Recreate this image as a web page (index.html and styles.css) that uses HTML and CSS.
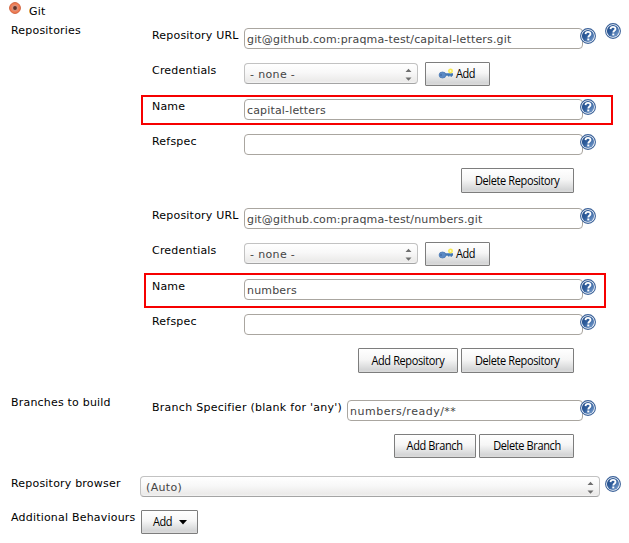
FILE: index.html
```html
<!DOCTYPE html>
<html lang="en">
<head>
<meta charset="utf-8">
<title>Git</title>
<link rel="stylesheet" href="styles.css">
</head>
<body>
<svg width="0" height="0" class="defs" aria-hidden="true">
  <defs>
    <linearGradient id="blue" x1="0" y1="0" x2="1" y2="1">
      <stop offset="0" stop-color="#204a87"/><stop offset=".45" stop-color="#2f5d9c"/><stop offset="1" stop-color="#86a9d6"/>
    </linearGradient>
    <symbol id="help" viewBox="0 0 16 16">
      <circle cx="8" cy="8" r="7.4" fill="#fff" stroke="#3a6199" stroke-width="1.1"/>
      <circle cx="8" cy="8" r="6.1" fill="url(#blue)"/>
      <path d="M5.500 6.100C5.600 4.500 6.600 3.900 8 3.900s2.500.7 2.500 2C10.500 7.500 8.300 7.400 8.300 9.400" fill="none" stroke="#fff" stroke-width="1.800"/>
      <path d="M7.300 10.500h2v1.900h-2z" fill="#fff"/>
    </symbol>
    <symbol id="key" viewBox="0 0 16 16">
      <ellipse cx="8" cy="14.800" rx="5.500" ry=".8" fill="#ddd"/>
      <path d="M6 7.300H15v2.400h-1v1h-1.500V9.700h-1v.9H10V9.700H6z" fill="#4278b5"/>
      <ellipse cx="4.500" cy="9" rx="3.400" ry="3" fill="#5b8ac5" stroke="#4a7ab4" stroke-width=".8"/>
      <path d="M2.300 9h1.500" stroke="#2d568c" stroke-width="1.200"/>
      <circle cx="12.500" cy="5" r="1.700" fill="#fffbc0" stroke="#f8ea50" stroke-width="1.500"/>
    </symbol>
    <symbol id="updown" viewBox="0 0 7 13">
      <path d="M.5 4L3.500 .8 6.500 4zM.5 9.500L3.500 12.700 6.500 9.500z" fill="#6e6e6e"/>
    </symbol>
  </defs>
</svg>
<main class="form">
  <header class="title">
    <svg class="radio" viewBox="0 0 12 12"><circle cx="6" cy="6" r="5.400" fill="#f07f57" stroke="#d0603c"/><circle cx="6" cy="6" r="3.200" fill="#d9907a"/><circle cx="6" cy="6" r="1.900" fill="#5c342c"/></svg>
    <span>Git</span>
  </header>

  <section class="section repositories">
    <div class="section-label">Repositories</div>
    <div class="fields">
      <div class="row"><label>Repository URL</label><div class="input">git@github.com:praqma-test/capital-letters.git</div><svg class="help"><use href="#help"/></svg></div>
      <div class="row tall"><label>Credentials</label><div class="select">- none -<svg class="arrows"><use href="#updown"/></svg></div><button class="key-button"><svg class="key"><use href="#key"/></svg><span>Add</span></button></div>
      <div class="row"><label>Name</label><div class="input">capital-letters</div><svg class="help"><use href="#help"/></svg><i class="mark mark-first"></i></div>
      <div class="row short"><label>Refspec</label><div class="input"></div><svg class="help"><use href="#help"/></svg></div>
      <div class="actions"><button class="b-delrepo"><span>Delete Repository</span></button></div>

      <div class="row"><label>Repository URL</label><div class="input">git@github.com:praqma-test/numbers.git</div><svg class="help"><use href="#help"/></svg></div>
      <div class="row tall"><label>Credentials</label><div class="select">- none -<svg class="arrows"><use href="#updown"/></svg></div><button class="key-button"><svg class="key"><use href="#key"/></svg><span>Add</span></button></div>
      <div class="row"><label>Name</label><div class="input">numbers</div><svg class="help"><use href="#help"/></svg><i class="mark mark-second"></i></div>
      <div class="row short"><label>Refspec</label><div class="input"></div><svg class="help"><use href="#help"/></svg></div>
      <div class="actions"><button class="b-addrepo"><span>Add Repository</span></button><button class="b-delrepo"><span>Delete Repository</span></button></div>
    </div>
    <svg class="help section-help"><use href="#help"/></svg>
  </section>

  <section class="section branches">
    <div class="section-label">Branches to build</div>
    <div class="fields">
      <div class="row short wide-label"><label>Branch Specifier (blank for 'any')</label><div class="input">numbers/ready/**</div><svg class="help"><use href="#help"/></svg></div>
      <div class="actions low"><button class="b-addbranch"><span>Add Branch</span></button><button class="b-delbranch"><span>Delete Branch</span></button></div>
    </div>
  </section>

  <section class="line browser">
    <div class="line-label">Repository browser</div>
    <div class="select">(Auto)<svg class="arrows"><use href="#updown"/></svg></div>
    <svg class="help"><use href="#help"/></svg>
  </section>

  <section class="line">
    <div class="line-label">Additional Behaviours</div>
    <button class="menu-button"><span>Add</span><svg class="caret" viewBox="0 0 8 5"><path d="M0 0h8L4 4.500z"/></svg></button>
  </section>
</main>
</body>
</html>
```
FILE: styles.css
```css
* { box-sizing: border-box; }
body {
  margin: 0;
  background: #fff;
  color: #000;
  font: 11px/14px "DejaVu Sans", Verdana, sans-serif;
  letter-spacing: .2px;
}
svg { display: block; flex: none; }
.defs { position: absolute; }
.form { width: 629px; height: 543px; overflow: hidden; padding-left: 11px; white-space: nowrap; }
.title { display: flex; height: 23px; padding-top: 2px; }
.radio { width: 12px; height: 12px; margin: 0 8px 0 -2px; }
.title span { padding-top: 3px; }

.section { display: grid; grid-template-columns: 141px 428px 25px; }
.repositories { height: 372px; }
.branches { height: 81px; }
.section-label { padding-top: 1px; }
.fields { padding-top: 5px; }
.section-help { margin-left: 25px; }

.row { position: relative; display: grid; grid-template-columns: 92px 339px 16px; height: 35px; align-items: start; }
.row.tall { height: 36px; grid-template-columns: 92px 174px 65px; }
.row.short { height: 34px; }
.row.wide-label { grid-template-columns: 195px 236px 16px; }
.row label { padding-top: 1px; }
.wide-label label { letter-spacing: .27px; }
.wide-label .input { letter-spacing: .5px; }
.row .help { margin-left: -3px; }
.row .key-button { margin: -1px 0 0 7px; }

.input, .select { height: 21px; line-height: 22px; border-radius: 4px; color: #444; }
.input { border: 1px solid #aaa6a0; padding-left: 2px; background: #fff; letter-spacing: .16px; }
.select {
  display: flex;
  justify-content: space-between;
  border: 1px solid #c2c2c2;
  border-bottom-color: #a4a4a4;
  padding: 0 5px;
  background: linear-gradient(#fff 0%, #f8f8f8 45%, #ebeae9 90%, #f4f4f4 100%);
  letter-spacing: .35px;
}
.arrows { width: 7px; height: 13px; margin-top: 4px; }
.help { width: 16px; height: 16px; position: relative; }

.mark { position: absolute; border: 2px solid #f60000; }
.mark-first { left: -11px; top: -4px; width: 472px; height: 30px; }
.mark-second { left: -8px; top: -6px; width: 462px; height: 35px; }

.actions { display: flex; justify-content: flex-end; gap: 3px; width: 422px; height: 40px; }
button {
  display: flex;
  align-items: center;
  justify-content: center;
  height: 25px;
  padding: 0;
  border: 1px solid #7d7d7d;
  border-radius: 1px;
  background: linear-gradient(#fff 0%, #f6f6f6 45%, #d4d5d6 90%, #dcdcdc 100%);
  color: #000;
  font: 500 12px/16px "Open Sans", "Noto Sans", sans-serif;
  letter-spacing: -.4px;
}
button span { transform: scaleX(.915); }
.b-delrepo { width: 113px; }
.b-addrepo { width: 100px; }
.low button, .key-button, .menu-button { height: 24px; }
.b-addbranch { width: 82px; }
.b-delbranch { width: 95px; }
.key-button { width: 65px; gap: 1px; }
.key { width: 16px; height: 16px; }

.line { display: flex; height: 34px; }
.line-label { width: 129px; padding-top: 1px; }
.browser .select { width: 460px; }
.browser .help { margin-left: 5px; }
.menu-button { width: 57px; margin-left: 1px; gap: 6px; }
.caret { width: 8px; height: 5px; }
```
